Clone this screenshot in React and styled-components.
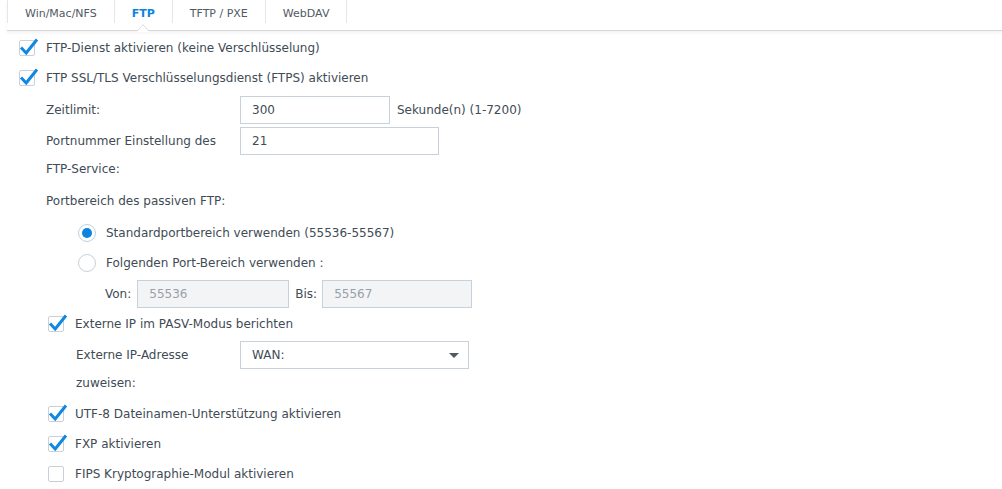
import React from "react";
import styled, { createGlobalStyle } from "styled-components";

const Global = createGlobalStyle`
  html, body { margin: 0; padding: 0; background: #fff; }
  body {
    font-family: "DejaVu Sans", Verdana, sans-serif;
    font-size: 12px;
    color: #414b55;
    width: 1002px;
    height: 489px;
    overflow: hidden;
  }
  * { box-sizing: border-box; }
`;

const Page = styled.div`
  display: flex;
  flex-direction: column;
  width: 1002px;
  height: 489px;
`;

const TabBar = styled.div`
  display: flex;
  align-items: flex-start;
  height: 31px;
  margin-left: 7px;
  border-bottom: 1px solid #d6d8da;
  box-shadow: 0 2px 3px rgba(0, 0, 0, 0.05);
  position: relative;
`;

const Tab = styled.div`
  position: relative;
  height: 23px;
  line-height: 27px;
  padding: 0 17px;
  font-size: 11px;
  border-left: 1px solid #e4e7ea;
  color: ${(p) => (p.$active ? "#0a84e0" : "#505a64")};
  font-weight: ${(p) => (p.$active ? "bold" : "normal")};
  white-space: nowrap;
  &:last-child { border-right: 1px solid #e4e7ea; }
  ${(p) =>
    p.$active &&
    `
    &::before, &::after {
      content: "";
      position: absolute;
      left: 50%;
      width: 0; height: 0;
      border-left: 6px solid transparent;
      border-right: 6px solid transparent;
      transform: translateX(-50%);
    }
    &::before { top: 24px; border-bottom: 7px solid #d6d8da; }
    &::after { top: 25px; border-bottom: 7px solid #fff; z-index: 1; }
  `}
`;

const Content = styled.div`
  display: flex;
  flex-direction: column;
  padding-top: 2px;
`;

const Row = styled.div`
  display: flex;
  align-items: center;
  min-height: ${(p) => p.$h || 30}px;
  margin-top: ${(p) => p.$mt || 0}px;
  padding-left: ${(p) => p.$indent || 0}px;
  white-space: nowrap;
`;

const FieldRow = styled.div`
  display: flex;
  align-items: flex-start;
  margin-top: ${(p) => p.$mt || 0}px;
  padding-left: ${(p) => p.$indent}px;
`;

const Label = styled.div`
  width: ${(p) => p.$w}px;
  margin-right: ${(p) => 240 - p.$indent - p.$w}px;
  line-height: 28px;
  flex-shrink: 0;
`;

const PlainLabel = styled.div`
  line-height: 28px;
  margin-top: ${(p) => p.$mt || 0}px;
  padding-left: ${(p) => p.$indent}px;
`;

const BoxWrap = styled.span`
  position: relative;
  display: inline-block;
  width: 16px;
  height: 16px;
  margin-right: 11px;
  border: 1px solid #c9d0d7;
  border-radius: 2px;
  background: #fff;
  flex-shrink: 0;
`;

const CheckSvg = styled.svg`
  position: absolute;
  left: -2px;
  top: -5px;
`;

const Check = ({ checked }) => (
  <BoxWrap>
    {checked && (
      <CheckSvg width="22" height="20" viewBox="0 0 22 20">
        <path
          d="M3 11.5 L8.2 17 L19 3.5"
          fill="none"
          stroke="#1088e2"
          strokeWidth="3"
          strokeLinejoin="miter"
        />
      </CheckSvg>
    )}
  </BoxWrap>
);

const Radio = styled.span`
  position: relative;
  display: inline-block;
  width: 18px;
  height: 18px;
  border-radius: 50%;
  border: 1px solid ${(p) => (p.$on ? "#c2cfdc" : "#c9d0d7")};
  margin-right: 10px;
  flex-shrink: 0;
  background: #fff;
  ${(p) =>
    p.$on &&
    `
    &::after {
      content: "";
      position: absolute;
      left: 3px; top: 3px;
      width: 10px; height: 10px;
      border-radius: 50%;
      background: #0a84e0;
    }
  `}
`;

const Input = styled.div`
  width: ${(p) => p.$w}px;
  height: 28px;
  line-height: 26px;
  padding-left: 11px;
  border: 1px solid #c8d1da;
  background: ${(p) => (p.$disabled ? "#f2f4f6" : "#fff")};
  color: ${(p) => (p.$disabled ? "#98a1aa" : "#414b55")};
  flex-shrink: 0;
`;

const Select = styled(Input)`
  display: flex;
  align-items: center;
  justify-content: space-between;
  padding-right: 9px;
`;

const Caret = styled.span`
  width: 0;
  height: 0;
  border-left: 5px solid transparent;
  border-right: 5px solid transparent;
  border-top: 5px solid #4f5963;
`;

const Suffix = styled.span`
  margin-left: 7px;
  line-height: 28px;
  white-space: nowrap;
`;

const RangeLabel = styled.span`
  margin-right: ${(p) => p.$mr}px;
  margin-left: ${(p) => p.$ml || 0}px;
`;

export default function App() {
  return (
    <Page>
      <Global />
      <TabBar>
        <Tab>Win/Mac/NFS</Tab>
        <Tab $active>FTP</Tab>
        <Tab>TFTP / PXE</Tab>
        <Tab>WebDAV</Tab>
      </TabBar>
      <Content>
        <Row $indent={19}>
          <Check checked />
          FTP-Dienst aktivieren (keine Verschlüsselung)
        </Row>
        <Row $indent={19}>
          <Check checked />
          FTP SSL/TLS Verschlüsselungsdienst (FTPS) aktivieren
        </Row>
        <FieldRow $indent={46} $mt={3}>
          <Label $indent={46} $w={185}>Zeitlimit:</Label>
          <Input $w={150}>300</Input>
          <Suffix>Sekunde(n) (1-7200)</Suffix>
        </FieldRow>
        <FieldRow $indent={46} $mt={3}>
          <Label $indent={46} $w={185}>Portnummer Einstellung des FTP-Service:</Label>
          <Input $w={199}>21</Input>
        </FieldRow>
        <PlainLabel $indent={46} $mt={4}>Portbereich des passiven FTP:</PlainLabel>
        <Row $indent={78} $mt={3}>
          <Radio $on />
          Standardportbereich verwenden (55536-55567)
        </Row>
        <Row $indent={78}>
          <Radio />
          Folgenden Port-Bereich verwenden :
        </Row>
        <Row $indent={105} $h={28} $mt={2}>
          <RangeLabel $mr={6}>Von:</RangeLabel>
          <Input $w={152} $disabled>55536</Input>
          <RangeLabel $ml={6} $mr={5}>Bis:</RangeLabel>
          <Input $w={150} $disabled>55567</Input>
        </Row>
        <Row $indent={48} $mt={1}>
          <Check checked />
          Externe IP im PASV-Modus berichten
        </Row>
        <FieldRow $indent={76} $mt={2}>
          <Label $indent={76} $w={155}>Externe IP-Adresse zuweisen:</Label>
          <Select $w={229}>
            WAN:
            <Caret />
          </Select>
        </FieldRow>
        <Row $indent={48} $mt={2}>
          <Check checked />
          UTF-8 Dateinamen-Unterstützung aktivieren
        </Row>
        <Row $indent={48}>
          <Check checked />
          FXP aktivieren
        </Row>
        <Row $indent={48}>
          <Check />
          FIPS Kryptographie-Modul aktivieren
        </Row>
      </Content>
    </Page>
  );
}
